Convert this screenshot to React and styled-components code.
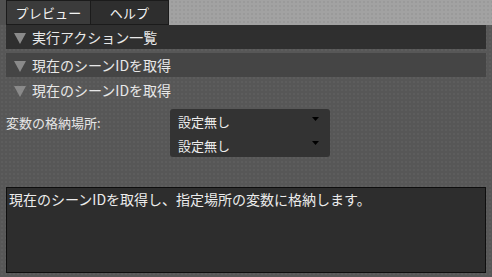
import React from "react";
import styled, { createGlobalStyle } from "styled-components";

const Global = createGlobalStyle`
  html, body { margin: 0; padding: 0; background: #565656; }
  body { font-family: "Noto Sans CJK JP", "Noto Sans", sans-serif; }
`;

const Page = styled.div`
  width: 492px;
  height: 277px;
  overflow: hidden;
  background-color: #575757;
  background-image: radial-gradient(rgba(255,255,255,0.035) 1px, transparent 1px);
  background-size: 4px 4px;
  color: #e6e6e6;
`;

const TabBar = styled.div`
  display: flex;
  height: 25px;
  box-sizing: border-box;
  border-left: 6px solid #505050;
  background-color: #a2a2a2;
  background-image: radial-gradient(rgba(0,0,0,0.05) 1px, transparent 1px);
  background-size: 4px 4px;
`;

const Tab = styled.div`
  width: ${(p) => p.$w}px;
  height: 25px;
  box-sizing: border-box;
  border: 1px solid #1b1b1b;
  border-left-width: ${(p) => (p.$first ? 1 : 0)}px;
  background: ${(p) => (p.$active ? "#3b3b3b" : "#2e2e2e")};
  color: #f4f4f4;
  font-size: 13px;
  display: flex;
  align-items: center;
  justify-content: center;
  letter-spacing: 0.2px;
`;

const Content = styled.div`
  padding: 0 6px;
  display: flex;
  flex-direction: column;
`;

const Header = styled.div`
  height: 24px;
  margin-top: ${(p) => p.$mt || 0}px;
  display: flex;
  align-items: center;
  padding-left: 8px;
  gap: 6px;
  background: ${(p) => p.$bg};
  font-size: 14px;
  color: #e8e8e8;
`;

const Tri = styled.svg`
  width: 12px;
  height: 11px;
  flex: none;
  margin-top: 2px;
`;

const Arrow = () => (
  <Tri viewBox="0 0 12 11">
    <polygon points="0,0 12,0 6,11" fill="#8a8a8a" />
  </Tri>
);

const FieldRow = styled.div`
  display: grid;
  grid-template-columns: 164px 160px;
  margin-top: 7px;
`;

const Label = styled.div`
  font-size: 13px;
  color: #e6e6e6;
  padding-top: 4px;
`;

const SelectCol = styled.div`
  display: flex;
  flex-direction: column;
`;

const Select = styled.div`
  height: 24px;
  background: #333333;
  border-radius: ${(p) => (p.$top ? "3px 3px 0 0" : "0 0 3px 3px")};
  display: flex;
  align-items: center;
  justify-content: space-between;
  padding: 0 11px 0 8px;
  font-size: 13px;
  color: #ececec;
`;

const Caret = styled.svg`
  width: 7px;
  height: 4px;
  margin-top: -4px;
`;

const Desc = styled.div`
  margin-top: 30px;
  height: 86px;
  box-sizing: border-box;
  border: 1px solid #0e0e0e;
  background: #2d2d2d;
  padding: 1px 2px;
  font-size: 14px;
  color: #ececec;
  line-height: 20px;
`;

export default function App() {
  return (
    <Page>
      <Global />
      <TabBar>
        <Tab $w={85} $first $active>プレビュー</Tab>
        <Tab $w={78}>ヘルプ</Tab>
      </TabBar>
      <Content>
        <Header $bg="#2f2f2f">
          <Arrow />
          実行アクション一覧
        </Header>
        <Header $bg="#454545" $mt={4}>
          <Arrow />
          現在のシーンIDを取得
        </Header>
        <Header $bg="transparent" $mt={1}>
          <Arrow />
          現在のシーンIDを取得
        </Header>
        <FieldRow>
          <Label>変数の格納場所:</Label>
          <SelectCol>
            <Select $top>
              設定無し
              <Caret viewBox="0 0 7 4">
                <polygon points="0,0 7,0 3.5,4" fill="#000" />
              </Caret>
            </Select>
            <Select>
              設定無し
              <Caret viewBox="0 0 7 4">
                <polygon points="0,0 7,0 3.5,4" fill="#000" />
              </Caret>
            </Select>
          </SelectCol>
        </FieldRow>
        <Desc>現在のシーンIDを取得し、指定場所の変数に格納します。</Desc>
      </Content>
    </Page>
  );
}
